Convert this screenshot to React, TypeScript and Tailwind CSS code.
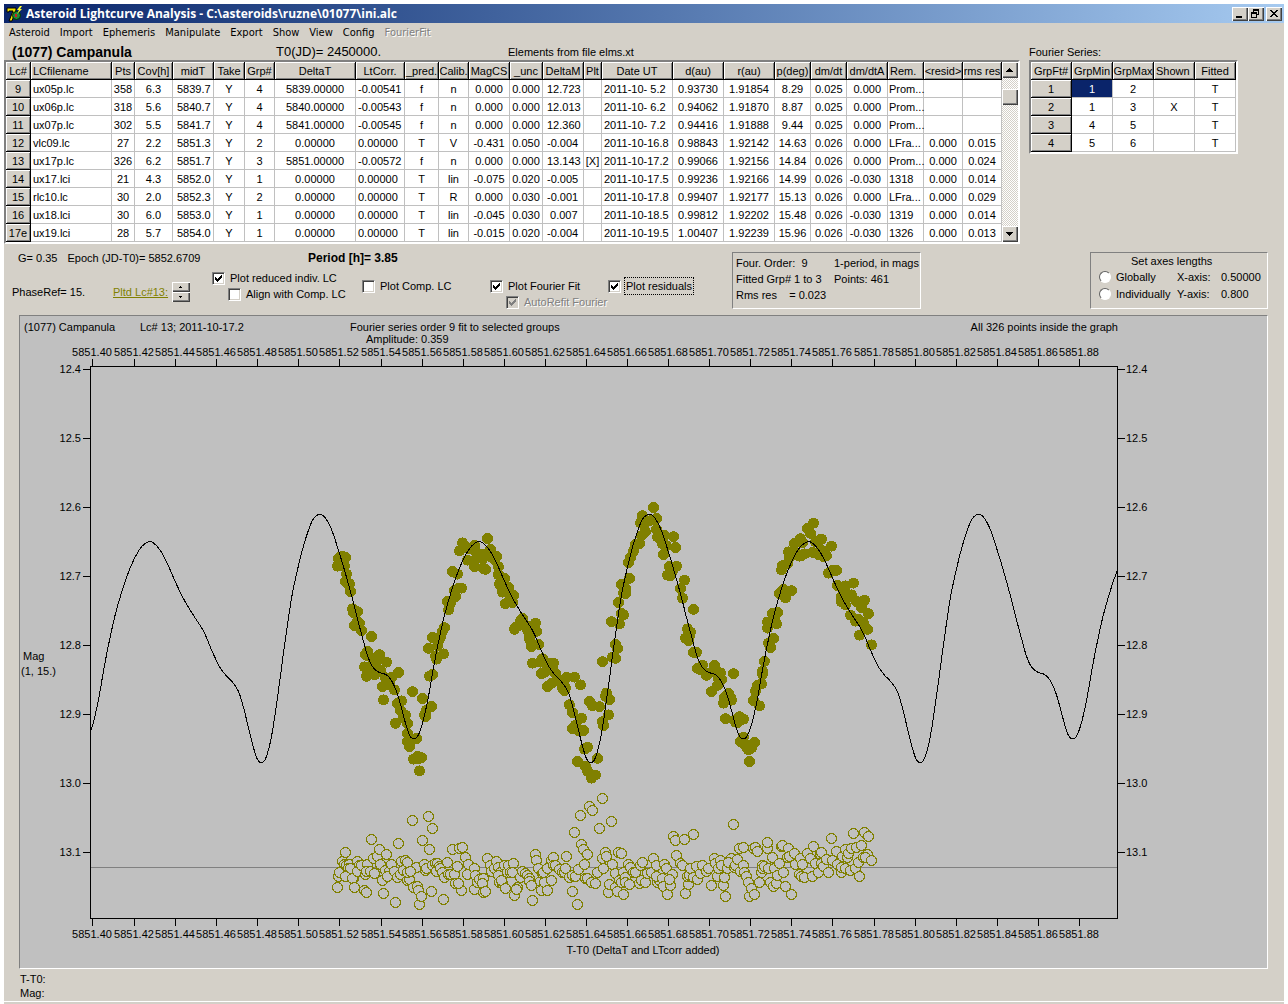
import React from "react";

type Align = "l" | "c" | "r" | "p" | "n";

interface Column {
  name: string;
  width: number;
  align: Align;
  headLeft?: boolean;
}

const lcColumns: Column[] = [
  { name: "Lc#", width: 25, align: "c" },
  { name: "LCfilename", width: 81, align: "l", headLeft: true },
  { name: "Pts", width: 23, align: "c" },
  { name: "Cov[h]", width: 38, align: "c" },
  { name: "midT", width: 41, align: "p" },
  { name: "Take", width: 31, align: "c" },
  { name: "Grp#", width: 30, align: "c" },
  { name: "DeltaT", width: 81, align: "c" },
  { name: "LtCorr.", width: 49, align: "l" },
  { name: "_pred.", width: 34, align: "c" },
  { name: "Calib.", width: 30, align: "c" },
  { name: "MagCS", width: 41, align: "c" },
  { name: "_unc", width: 33, align: "c" },
  { name: "DeltaM", width: 41, align: "p" },
  { name: "Plt", width: 18, align: "c" },
  { name: "Date UT", width: 71, align: "l" },
  { name: "d(au)", width: 51, align: "c" },
  { name: "r(au)", width: 51, align: "c" },
  { name: "p(deg)", width: 36, align: "c" },
  { name: "dm/dt", width: 36, align: "p" },
  { name: "dm/dtA", width: 41, align: "r" },
  { name: "Rem.", width: 36, align: "n", headLeft: true },
  { name: "<resid>", width: 39, align: "c" },
  { name: "rms res", width: 39, align: "c" },
];

const lcRows: string[][] = [
  "9|ux05p.lc|358|6.3|5839.7|Y|4|5839.00000|-0.00541|f|n|0.000|0.000|12.723||2011-10- 5.2|0.93730|1.91854|8.29|0.025|0.000|Prom...||",
  "10|ux06p.lc|318|5.6|5840.7|Y|4|5840.00000|-0.00543|f|n|0.000|0.000|12.013||2011-10- 6.2|0.94062|1.91870|8.87|0.025|0.000|Prom...||",
  "11|ux07p.lc|302|5.5|5841.7|Y|4|5841.00000|-0.00545|f|n|0.000|0.000|12.360||2011-10- 7.2|0.94416|1.91888|9.44|0.025|0.000|Prom...||",
  "12|vlc09.lc|27|2.2|5851.3|Y|2|0.00000|0.00000|T|V|-0.431|0.050|-0.004||2011-10-16.8|0.98843|1.92142|14.63|0.026|0.000|LFra...|0.000|0.015",
  "13|ux17p.lc|326|6.2|5851.7|Y|3|5851.00000|-0.00572|f|n|0.000|0.000|13.143|[X]|2011-10-17.2|0.99066|1.92156|14.84|0.026|0.000|Prom...|0.000|0.024",
  "14|ux17.lci|21|4.3|5852.0|Y|1|0.00000|0.00000|T|lin|-0.075|0.020|-0.005||2011-10-17.5|0.99236|1.92166|14.99|0.026|-0.030|1318|0.000|0.014",
  "15|rlc10.lc|30|2.0|5852.3|Y|2|0.00000|0.00000|T|R|0.000|0.030|-0.001||2011-10-17.8|0.99407|1.92177|15.13|0.026|0.000|LFra...|0.000|0.029",
  "16|ux18.lci|30|6.0|5853.0|Y|1|0.00000|0.00000|T|lin|-0.045|0.030|\u00a00.007||2011-10-18.5|0.99812|1.92202|15.48|0.026|-0.030|1319|0.000|0.014",
  "17e|ux19.lci|28|5.7|5854.0|Y|1|0.00000|0.00000|T|lin|-0.015|0.020|-0.004||2011-10-19.5|1.00407|1.92239|15.96|0.026|-0.030|1326|0.000|0.013",
].map((r) => r.split("|"));

const fitColumns: Column[] = [
  { name: "GrpFt#", width: 41, align: "c" },
  { name: "GrpMin", width: 41, align: "c" },
  { name: "GrpMax", width: 41, align: "c" },
  { name: "Shown", width: 41, align: "c", headLeft: true },
  { name: "Fitted", width: 41, align: "c" },
];

const fitRows: string[][] = [
  ["1", "1", "2", "", "T"],
  ["2", "1", "3", "X", "T"],
  ["3", "4", "5", "", "T"],
  ["4", "5", "6", "", "T"],
];

const alignClass: Record<Align, string> = {
  l: "overflow-hidden text-left pl-0.5",
  c: "overflow-hidden text-center",
  r: "overflow-hidden text-right pr-1.5",
  p: "overflow-hidden text-left pl-1",
  n: "text-left pl-px",
};

const sunken = "border-2 border-t-[#808080] border-l-[#808080] border-r-white border-b-white";
const raised =
  "bg-[#d4d0c8] shadow-[inset_1px_1px_0_#fff,inset_-1px_-1px_0_#404040,inset_-2px_-2px_0_#808080]";
const headCell =
  "h-[18px] overflow-hidden border-r border-b border-black bg-[#d4d0c8] p-0 font-normal shadow-[inset_1px_1px_0_#fff,inset_-1px_-1px_0_#808080]";

function Grid({
  label,
  columns,
  rows,
  selected,
}: {
  label: string;
  columns: Column[];
  rows: string[][];
  selected?: [number, number];
}) {
  const total = columns.reduce((s, c) => s + c.width, 0);
  return (
    <table
      aria-label={label}
      className="table-fixed border-separate border-spacing-0 bg-white text-[11px] leading-4 whitespace-nowrap"
      style={{ width: total }}
    >
      <colgroup>
        {columns.map((c) => (
          <col key={c.name} style={{ width: c.width }} />
        ))}
      </colgroup>
      <thead>
        <tr>
          {columns.map((c) => (
            <th key={c.name} scope="col" className={`${headCell} ${c.headLeft ? "pl-0.5 text-left" : "text-center"}`}>
              {c.name}
            </th>
          ))}
        </tr>
      </thead>
      <tbody>
        {rows.map((row, i) => (
          <tr key={row[0]}>
            {row.map((v, j) =>
              j === 0 ? (
                <th key={j} scope="row" className={`${headCell} text-center`}>
                  {v}
                </th>
              ) : (
                <td
                  key={j}
                  className={`h-[18px] border-r border-b border-[#c0c0c0] py-0 ${alignClass[columns[j].align]} ${
                    selected && selected[0] === i && selected[1] === j ? "bg-[#0a246a] text-white" : ""
                  }`}
                >
                  {v}
                </td>
              )
            )}
          </tr>
        ))}
      </tbody>
    </table>
  );
}

function Check({
  id,
  label,
  checked,
  disabled,
  focused,
}: {
  id: string;
  label: string;
  checked?: boolean;
  disabled?: boolean;
  focused?: boolean;
}) {
  return (
    <div className="flex h-4 items-center gap-1">
      <span className="relative block size-[13px] shrink-0">
        <input
          id={id}
          type="checkbox"
          defaultChecked={checked}
          disabled={disabled}
          className={`peer block size-[13px] appearance-none border border-t-[#808080] border-l-[#808080] border-r-white border-b-white shadow-[inset_1px_1px_0_#404040,inset_-1px_-1px_0_#d4d0c8] ${
            disabled ? "bg-[#d4d0c8]" : "bg-white"
          }`}
        />
        <svg
          viewBox="0 0 13 13"
          shapeRendering="crispEdges"
          className="pointer-events-none absolute inset-0 hidden size-[13px] peer-checked:block"
        >
          <path
            d="M3 5h1v1h1v1h1v-1h1v-1h1v-1h1v-1h1v3h-1v1h-1v1h-1v1h-1v1h-1v-1h-1v-1h-1z"
            fill={disabled ? "#808080" : "#000"}
          />
        </svg>
      </span>
      <label
        htmlFor={id}
        className={`px-px leading-4 whitespace-nowrap ${focused ? "outline outline-dotted outline-black" : ""} ${
          disabled ? "text-[#808080] [text-shadow:1px_1px_0_#fff]" : ""
        }`}
      >
        {label}
      </label>
    </div>
  );
}

function AxisRadio({ id, label }: { id: string; label: string }) {
  return (
    <span className="flex items-center gap-[5px]">
      <input
        id={id}
        type="radio"
        name="axes"
        className="block size-3 shrink-0 appearance-none rounded-full border border-t-[#606060] border-l-[#606060] border-r-white border-b-white bg-white checked:bg-black"
      />
      <label htmlFor={id}>{label}</label>
    </span>
  );
}

/* One rotation of the fitted light curve, in chart units. */
const PERIOD = 329.4;
const START = 320;
const cycle: [number, number][] = [
  [320, 514.3], [325, 517.5], [331.7, 530], [339, 552], [345, 572], [352.7, 600], [356.7, 616], [362.3, 637],
  [367, 654], [371, 664], [375, 669.5], [380, 672.7], [384, 673.7], [388.3, 676.5], [393.3, 684], [397.7, 695],
  [401.7, 709], [406, 725], [410, 736], [414, 738.7], [417.7, 736], [421.7, 726], [425.7, 710], [429.3, 692],
  [432.7, 672], [436.7, 651], [440.7, 631.7], [444.3, 616], [449.3, 598], [455, 580], [461.7, 563], [468.3, 550.5],
  [473.3, 544.5], [478.7, 541.7], [483.3, 543.3], [490, 551], [496.7, 563.5], [503.3, 578.5], [511.7, 596.5],
  [521.7, 613.5], [533.3, 632], [541, 650], [548.3, 665.5], [555, 675], [561.7, 682], [568.3, 692.5], [573.3, 709],
  [577.7, 727], [582.7, 747], [586.7, 759], [591, 762.7], [595, 758.5], [599.3, 744], [602.7, 726], [606, 703.5],
  [609.3, 680], [613.3, 650], [618.3, 615], [621.7, 594], [627.3, 568], [633.3, 544.5], [640, 524.5], [644.3, 517],
];

function knot(i: number): [number, number] {
  const n = cycle.length;
  const turn = Math.floor(i / n);
  const [x, y] = cycle[i - turn * n];
  return [x + turn * PERIOD, y];
}

function curveAt(x: number): number {
  const u = x - Math.floor((x - START) / PERIOD) * PERIOD;
  let i = 0;
  while (knot(i + 1)[0] <= u) i++;
  const [a, b, c, d] = [knot(i - 1), knot(i), knot(i + 1), knot(i + 2)];
  const h = c[0] - b[0];
  const m0 = ((c[1] - a[1]) / (c[0] - a[0])) * h;
  const m1 = ((d[1] - b[1]) / (d[0] - b[0])) * h;
  const t = (u - b[0]) / h;
  const t2 = t * t;
  const t3 = t2 * t;
  return (2 * t3 - 3 * t2 + 1) * b[1] + (t3 - 2 * t2 + t) * m0 + (3 * t2 - 2 * t3) * c[1] + (t3 - t2) * m1;
}

/* Residuals of the observed points, in thirds of a chart unit. */
const residualsA =
  "52,307 55,274 58,262 66,228 72,238 76,202 78,240 88,237 85,250 90,248 75,272 98,280 97,279 103,305 112,228 118,240 112,258 122,241 131,316 139,320 134,268 140,237 138,258 150,258 154,163 160,220 163,265 171,213 178,193 181,236 187,284 190,323 195,255 199,208 206,258 200,272 213,236 222,258 226,352 232,276 235,175 243,228 240,268 254,226 250,254 262,232 260,286 268,283 262,262 277,106 280,305 287,247 290,304 270,258 294,315 298,356 303,334 307,166 313,237 316,256 319,248 325,94 328,193 337,130 334,319 335,240 345,235 352,235 356,244 348,258 360,250 370,343 382,230 366,262 373,276 385,268 390,268 397,193 401,268 404,293 410,244 417,190 427,187 424,314 415,293 436,217 441,268 445,238 463,250 461,311 466,270 470,290 477,283 489,279 485,295 488,320 495,319 502,220 510,240 512,257 522,250 527,229 535,245 540,260 533,270 537,292 546,294 543,285 556,310 552,240 560,260 565,240 570,262 580,235 583,329 590,306 575,262 587,312 600,275 607,259 615,265 620,270 628,278 628,288 634,301 637,346 646,207 648,224 655,250 660,288 665,265 663,314 670,262 672,290 682,314 682,248 692,286 694,225 700,217 700,240 706,240 718,252 726,262 733,262 736,250 739,214 748,275 757,319 755,270 763,142 766,272 772,358 775,253 781,91 784,178 790,193 793,238 796,278 802,208 807,64 817,76 800,280 812,292 826,295 830,260 832,260 838,130 845,220 847,40 850,250 856,200 859,214 865,320 868,298 877,238 874,109 886,265 885,305 890,317";
const residualsB =
  "85,200 92,205 86,285 93,292 100,328 100,262 104,275 113,238 106,290 118,298 120,246 128,262 136,262 146,295 150,240 157,230 152,285 164,292 172,265 182,262 190,220 199,240 202,290 208,285 198,272 215,280 220,304 223,238 229,248 232,328 241,301 246,268 250,154 256,166 259,211 236,283 270,235 277,240 283,163 310,148 286,325 294,298 290,272 298,270 300,250 310,275 319,244 322,283 330,265 337,241 348,257 355,250 364,301 373,220 376,235 380,272 390,226 385,250 392,240 398,301 403,275 406,334 412,250 420,222 424,218 415,232 430,118 432,246 436,240 442,222 448,190 460,187 450,258 458,240 463,262 468,272 474,292 478,334 484,310 493,328 490,188 496,187 502,199 506,290 512,262 515,240 517,250 522,242 530,190 532,172 535,250 540,290 547,217 550,302 552,250 558,293 560,270 568,235 572,184 577,181 580,260 586,304 590,215 595,190 596,212 604,328 612,205 616,238 626,268 630,220 634,274 637,238 641,275 652,205 660,220 666,272 670,184 676,235 684,262 690,208 694,202 694,235 700,242 708,222 715,262 724,160 725,225 739,199 742,238 752,260 756,214 754,245 764,193 770,215 766,250 775,205 780,255 784,190 790,145 797,187 796,250 804,232 808,274 814,181 818,215 823,142 830,208 826,215 835,154 842,226";

const ZERO = 867;
function parse(s: string, left: number): [number, number][] {
  return s.split(" ").map((p) => {
    const [x, y] = p.split(",").map(Number);
    return [Math.round(left + x / 3), Math.round(785 + y / 3)];
  });
}
const residuals = [...parse(residualsA, 320), ...parse(residualsB, 590)];

const curvePath = Array.from({ length: 1027 }, (_, i) => {
  const x = 91 + i;
  return `${i ? "L" : "M"}${x} ${curveAt(x).toFixed(1)}`;
}).join("");

const xTicks = Array.from({ length: 25 }, (_, i) => ({
  x: i === 0 ? 92 : Math.round(93 + i * 41.08),
  label: (5851.4 + i * 0.02).toFixed(2),
}));
const yTicks = Array.from({ length: 8 }, (_, i) => ({
  y: Math.round(369 + i * 69.05),
  label: (12.4 + i * 0.1).toFixed(1),
}));

function Chart() {
  return (
    <svg
      role="img"
      aria-label="Light curve of (1077) Campanula"
      viewBox="20 316 1247 652"
      className="block h-auto w-full text-[11px]"
    >
      <g>
        <text x="24" y="331">(1077) Campanula</text>
        <text x="140" y="331">Lc# 13; 2011-10-17.2</text>
        <text x="350" y="331">Fourier series order 9 fit to selected groups</text>
        <text x="366" y="343">Amplitude: 0.359</text>
        <text x="1118" y="331" textAnchor="end">All 326 points inside the graph</text>
        <text x="23" y="660">Mag</text>
        <text x="21" y="675">(1, 15.)</text>
        <text x="643" y="954" textAnchor="middle">T-T0 (DeltaT and LTcorr added)</text>
      </g>
      <g textAnchor="middle">
        {xTicks.map((t) => (
          <React.Fragment key={t.label}>
            <text x={t.x} y="356">{t.label}</text>
            <text x={t.x} y="938">{t.label}</text>
          </React.Fragment>
        ))}
      </g>
      {yTicks.map((t) => (
        <React.Fragment key={t.label}>
          <text x="81" y={t.y + 4} textAnchor="end">{t.label}</text>
          <text x="1126" y={t.y + 4}>{t.label}</text>
        </React.Fragment>
      ))}
      <g shapeRendering="crispEdges" fill="none" stroke="#000">
        <rect x="90.5" y="366.5" width="1027" height="552" />
        {xTicks.map((t) => (
          <path key={t.label} d={`M${t.x + 0.5} 359V366M${t.x + 0.5} 919V926`} />
        ))}
        {yTicks.map((t) => (
          <path key={t.label} d={`M83 ${t.y + 0.5}H90M1118 ${t.y + 0.5}H1125`} />
        ))}
        <path d={`M91 ${ZERO + 0.5}H1117`} stroke="#808080" />
      </g>
      <g shapeRendering="crispEdges" fill="#c0c0c0" stroke="#808000">
        {residuals.map(([x, y], i) => (
          <circle key={i} cx={x + 0.5} cy={y + 0.5} r="5" />
        ))}
      </g>
      <g shapeRendering="crispEdges" fill="#808000">
        {residuals.map(([x, y], i) => (
          <circle key={i} cx={x + 0.5} cy={curveAt(x) + y - ZERO + 0.5} r="5.5" />
        ))}
      </g>
      <path d={curvePath} shapeRendering="crispEdges" fill="none" stroke="#000" />
    </svg>
  );
}

function TitleIcon() {
  return (
    <svg viewBox="0 0 16 16" className="size-4 shrink-0" aria-hidden="true">
      <path d="M1 2h9v2L6 15H3l4-10H3v1H1z" fill="#f0e000" stroke="#000" strokeWidth="1" />
      <circle cx="10.5" cy="9.5" r="4" fill="#1f8a3a" stroke="#003000" />
      <path d="M9 8h2v3H9z" fill="#d02020" />
      <path d="M14 0l-3 4h2l-2 4 5-5h-2l2-3z" fill="#ffff30" />
    </svg>
  );
}

const menus = ["Asteroid", "Import", "Ephemeris", "Manipulate", "Export", "Show", "View", "Config"];

export default function App() {
  return (
    <div className="bg-white px-1 pt-1 font-['Liberation_Sans',Arial,sans-serif] text-[11px] leading-4 text-black">
      <div className="bg-[#d4d0c8] pb-0.5">
        <header className="flex h-[19px] items-center gap-1 bg-linear-to-r from-[#0a246a] to-[#a6caf0] pr-0.5 pl-0.5">
          <TitleIcon />
          <h1 className="font-['Open_Sans','Noto_Sans',sans-serif] text-xs leading-4 font-bold whitespace-nowrap text-white">
            Asteroid Lightcurve Analysis - C:\asteroids\ruzne\01077\ini.alc
          </h1>
          <div className="ml-auto flex">
            <button aria-label="Minimize" className={`h-3.5 w-4 ${raised}`}>
              <svg viewBox="0 0 16 14" className="block h-3.5 w-4" shapeRendering="crispEdges">
                <path d="M4 9h6v2H4z" />
              </svg>
            </button>
            <button aria-label="Restore" className={`h-3.5 w-4 ${raised}`}>
              <svg viewBox="0 0 16 14" className="block h-3.5 w-4" shapeRendering="crispEdges">
                <path d="M5 2h6v6H9v3H3V5h2zM6 4v1h3v2h1V4zM4 7v3h4V7z" fillRule="evenodd" />
              </svg>
            </button>
            <button aria-label="Close" className={`ml-0.5 h-3.5 w-4 ${raised}`}>
              <svg viewBox="0 0 16 14" className="block h-3.5 w-4" shapeRendering="crispEdges">
                <path d="M4 3h2v1h1v1h2V4h1V3h2v1h-1v1h-1v1H9v1h1v1h1v1h1v1h-2V9H9V8H7v1H6v1H4V9h1V8h1V7h1V6H6V5H5V4H4z" />
              </svg>
            </button>
          </div>
        </header>

        <nav className="flex h-5 items-center gap-2.5 pl-[5px] font-['DejaVu_Sans_Condensed','DejaVu_Sans',sans-serif]">
          {menus.map((m) => (
            <button key={m}>{m}</button>
          ))}
          <button disabled className="text-[#808080] [text-shadow:1px_1px_0_#fff]">
            FourierFit
          </button>
        </nav>

        <div className="flex items-start gap-[9px]">
          <section>
            <div className="flex h-[17px] items-center">
              <h2 className="w-[264px] pl-2 text-sm leading-4 font-bold">(1077) Campanula</h2>
              <span className="w-[232px] pl-2 text-[13px]">T0(JD)= 2450000.</span>
              <span className="pl-2">Elements from file elms.xt</span>
            </div>
            <div className={`flex ${sunken}`}>
              <Grid label="Lightcurves" columns={lcColumns} rows={lcRows} />
              <div className="flex w-4 flex-col bg-[repeating-conic-gradient(#fff_0_25%,#d4d0c8_0_50%)] bg-[length:2px_2px]">
                <button aria-label="Scroll up" className={`h-4 w-4 ${raised}`}>
                  <svg viewBox="0 0 16 16" className="block size-4" shapeRendering="crispEdges">
                    <path d="M7 6h1v1h1v1h1v1h1v1H4V9h1V8h1V7h1z" />
                  </svg>
                </button>
                <div className={`mt-[11px] h-4 w-4 ${raised}`} />
                <button aria-label="Scroll down" className={`mt-auto h-4 w-4 ${raised}`}>
                  <svg viewBox="0 0 16 16" className="block size-4" shapeRendering="crispEdges">
                    <path d="M4 6h7v1h-1v1H9v1H8v1H7V9H6V8H5V7H4z" />
                  </svg>
                </button>
              </div>
            </div>
          </section>
          <section>
            <h3 className="flex h-[17px] items-center">Fourier Series:</h3>
            <div className={`w-fit ${sunken}`}>
              <Grid label="Fourier series" columns={fitColumns} rows={fitRows} selected={[0, 1]} />
            </div>
          </section>
        </div>

        <section className="flex h-[71px] items-start pr-4 pl-2">
          <div className="w-[200px] pt-1.5">
            <p className="flex gap-2.5 pl-1.5 whitespace-nowrap">
              <span>G= 0.35</span>
              <span>Epoch (JD-T0)= 5852.6709</span>
            </p>
            <div className="mt-4 flex items-center">
              <span className="w-[101px]">PhaseRef= 15.</span>
              <a href="#lc13" className="text-[#808000] underline">
                Pltd Lc#13:
              </a>
              <span className="ml-1 flex flex-col">
                <button aria-label="Next lightcurve" className={`h-2.5 w-[18px] ${raised}`}>
                  <svg viewBox="0 0 18 10" className="block h-2.5 w-[18px]" shapeRendering="crispEdges">
                    <path d="M8 4h1v1h1v1H7V5h1z" />
                  </svg>
                </button>
                <button aria-label="Previous lightcurve" className={`h-2.5 w-[18px] ${raised}`}>
                  <svg viewBox="0 0 18 10" className="block h-2.5 w-[18px]" shapeRendering="crispEdges">
                    <path d="M7 4h3v1H9v1H8V5H7z" />
                  </svg>
                </button>
              </span>
            </div>
          </div>
          <div className="w-[150px] pt-1.5">
            <p className="pl-24 text-xs leading-4 font-bold whitespace-nowrap">Period [h]= 3.85</p>
            <div className="mt-1">
              <Check id="reduced" label="Plot reduced indiv. LC" checked />
            </div>
            <div className="pl-4">
              <Check id="align" label="Align with Comp. LC" />
            </div>
          </div>
          <div className="w-32 pt-[34px]">
            <Check id="comp" label="Plot Comp. LC" />
          </div>
          <div className="w-[118px] pt-[34px]">
            <Check id="fourier" label="Plot Fourier Fit" checked />
            <div className="pl-4">
              <Check id="refit" label="AutoRefit Fourier" checked disabled />
            </div>
          </div>
          <div className="w-[124px] pt-[34px]">
            <Check id="resid" label="Plot residuals" checked focused />
          </div>
          <div className="mt-2 grid h-[57px] w-[189px] grid-cols-[98px_1fr] content-start border border-t-[#808080] border-l-[#808080] border-r-white border-b-white pt-0.5 pl-[3px] whitespace-nowrap">
            <span className="whitespace-pre">Four. Order:  9</span>
            <span>1-period, in mags</span>
            <span>Fitted Grp# 1 to 3</span>
            <span>Points: 461</span>
            <span className="whitespace-pre">Rms res    = 0.023</span>
          </div>
          <div
            role="radiogroup"
            aria-labelledby="axes-title"
            className="mt-2 ml-auto h-[57px] w-[178px] border border-t-[#808080] border-l-[#808080] border-r-white border-b-white pl-2"
          >
            <p id="axes-title" className="pl-8 leading-4">
              Set axes lengths
            </p>
            <div className="grid grid-cols-[78px_44px_1fr] items-center">
              <AxisRadio id="globally" label="Globally" />
              <span>X-axis:</span>
              <span>0.50000</span>
            </div>
            <div className="grid grid-cols-[78px_44px_1fr] items-center pt-px">
              <AxisRadio id="individually" label="Individually" />
              <span>Y-axis:</span>
              <span>0.800</span>
            </div>
          </div>
        </section>

        <main className="mr-4 ml-[15px] border border-t-[#808080] border-l-[#808080] border-r-white border-b-white bg-[#c0c0c0]">
          <Chart />
        </main>
        <footer className="h-[33px] border-b border-white pt-[3px] pl-4 leading-[14px]">
          <p>T-T0:</p>
          <p>Mag:</p>
        </footer>
      </div>
    </div>
  );
}
